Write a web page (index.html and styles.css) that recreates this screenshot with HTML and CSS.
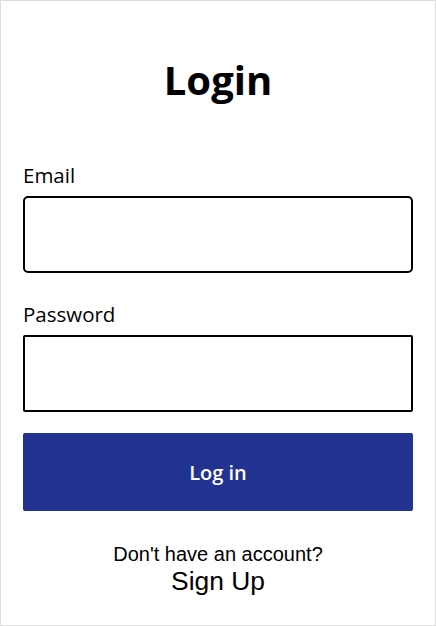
FILE: index.html
```html
<!DOCTYPE html>
<html lang="en">
<head>
<meta charset="utf-8">
<title>Login</title>
<link rel="stylesheet" href="styles.css">
</head>
<body>
<div class="page">
  <h1 class="title">Login</h1>
  <form class="form">
    <label class="label" for="email">Email</label>
    <input class="input input-email" id="email" type="email">
    <label class="label label-password" for="password">Password</label>
    <input class="input input-password" id="password" type="password">
    <button class="btn" type="button">Log in</button>
  </form>
  <div class="footer">
    <p class="footer-text">Don't have an account?</p>
    <a class="signup" href="#">Sign Up</a>
  </div>
</div>
</body>
</html>
```

FILE: styles.css
```css
* { box-sizing: border-box; }
html, body { margin: 0; padding: 0; background: #fff; }
body { font-family: "Open Sans", "DejaVu Sans", sans-serif; color: #000; }
.page {
  width: 436px;
  height: 626px;
  border: 1px solid #dddddd;
  padding: 0 22px;
  display: flex;
  flex-direction: column;
}
.title {
  margin: 55px 0 0;
  font-size: 40px;
  line-height: 48px;
  font-weight: 700;
  text-align: center;
}
.form {
  display: flex;
  flex-direction: column;
  margin-top: 59px;
}
.label {
  font-size: 20.5px;
  line-height: 24px;
  font-weight: 500;
}
.input {
  margin-top: 9px;
  height: 77px;
  border: 2px solid #000;
  background: #fff;
  outline: none;
  font: inherit;
}
.input-email { border-radius: 5px; }
.input-password { border-radius: 2px; }
.label-password { margin-top: 29px; }
.btn {
  margin-top: 21px;
  height: 78px;
  border: none;
  border-radius: 2px;
  background: #223290;
  color: #fff;
  font-family: inherit;
  font-size: 20px;
  font-weight: 600;
}
.footer {
  margin-top: 32px;
  display: flex;
  flex-direction: column;
  align-items: center;
  font-family: "Liberation Sans", Arial, sans-serif;
}
.footer-text {
  margin: 0;
  font-size: 20px;
  line-height: 23px;
}
.signup {
  font-size: 26.4px;
  line-height: 31px;
  color: #000;
  text-decoration: none;
}
```
